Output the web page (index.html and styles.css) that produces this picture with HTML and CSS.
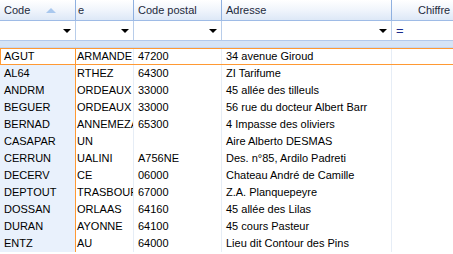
FILE: index.html
```html
<!DOCTYPE html>
<html lang="fr">
<head>
    <title>Liste</title>
    <link rel="stylesheet" href="styles.css">
</head>
<body>
    <div class="grid">
        <div class="row head">
            <div class="cell">Code <span class="sort-arrow"></span></div>
            <div class="cell city">e</div>
            <div class="cell">Code postal</div>
            <div class="cell">Adresse</div>
            <div class="cell last">Chiffre</div>
        </div>
        <div class="row filter">
            <div class="cell"><span class="drop"></span></div>
            <div class="cell"><span class="drop"></span></div>
            <div class="cell"><span class="drop"></span></div>
            <div class="cell"><span class="drop"></span></div>
            <div class="cell eq">=</div>
        </div>
        <div class="band"></div>
        <div id="rows"></div>
    </div>

    <script>
        const data = [
            ['AGUT', 'ARMANDE', '47200', '34 avenue Giroud'],
            ['AL64', 'RTHEZ', '64300', 'ZI Tarifume'],
            ['ANDRM', 'ORDEAUX', '33000', '45 allée des tilleuls'],
            ['BEGUER', 'ORDEAUX', '33000', '56 rue du docteur Albert Barr'],
            ['BERNAD', 'ANNEMEZA', '65300', '4 Impasse des oliviers'],
            ['CASAPAR', 'UN', '', 'Aire Alberto DESMAS'],
            ['CERRUN', 'UALINI', 'A756NE', 'Des. n°85, Ardilo Padreti'],
            ['DECERV', 'CE', '06000', 'Chateau André de Camille'],
            ['DEPTOUT', 'TRASBOUF', '67000', 'Z.A. Planquepeyre'],
            ['DOSSAN', 'ORLAAS', '64160', '45 allée des Lilas'],
            ['DURAN', 'AYONNE', '64100', '45 cours Pasteur'],
            ['ENTZ', 'AU', '64000', 'Lieu dit Contour des Pins']
        ];

        const rows = document.getElementById('rows');
        data.forEach((item, i) => {
            const row = document.createElement('div');
            row.className = 'row data' + (i === 0 ? ' current' : '');
            const classes = ['sorted', 'city', '', '', ''];
            item.concat(['']).forEach((text, j) => {
                const cell = document.createElement('div');
                cell.className = ('cell ' + classes[j]).trim();
                cell.textContent = text;
                row.appendChild(cell);
            });
            rows.appendChild(row);
        });
    </script>
</body>
</html>
```

FILE: styles.css
```css
body {
    margin: 0;
    background: #ffffff;
    font-family: "Liberation Sans", Arial, sans-serif;
    font-size: 11px;
    color: #000000;
    overflow: hidden;
}

.grid {
    width: 453px;
}

.row {
    display: grid;
    grid-template-columns: 76px 58px 88px 170px 80px;
}

.cell {
    box-sizing: border-box;
    padding: 0 3px 0 4px;
    white-space: nowrap;
    overflow: hidden;
    position: relative;
}

.cell.city {
    padding-left: 1px;
    padding-right: 0;
    text-overflow: clip;
}

.head {
    height: 21px;
    background: linear-gradient(#ffffff, #f2f6fc 45%, #dde8f7);
    border-bottom: 1px solid #9ebbe6;
    box-sizing: border-box;
}

.head .cell {
    line-height: 20px;
    color: #1e2a3c;
    border-right: 1px solid #8fb0e0;
}

.head .city {
    padding-left: 2px;
}

.head .last {
    padding-left: 26px;
}

.sort-arrow {
    position: absolute;
    left: 46px;
    top: 8px;
    width: 0;
    height: 0;
    border-left: 5px solid transparent;
    border-right: 5px solid transparent;
    border-bottom: 5px solid #a9c8ee;
}

.filter {
    height: 19px;
    background: #ffffff;
}

.filter .cell {
    border-right: 1px solid #b8cdea;
}

.drop {
    position: absolute;
    right: 4px;
    top: 8px;
    width: 0;
    height: 0;
    border-left: 4px solid transparent;
    border-right: 4px solid transparent;
    border-top: 4px solid #000000;
}

.eq {
    color: #1a2a8c;
    font-size: 13px;
    line-height: 19px;
}

.band {
    height: 6px;
    background: #d6e4f6;
    border-top: 1px solid #b3c9ea;
    border-bottom: 1px solid #c5d6ef;
}

.data {
    height: 17px;
}

.data .cell {
    line-height: 17px;
    border-right: 1px solid #e6edf6;
}

.data .sorted {
    background: #e9f1fc;
    border-right: 1px solid #ff9933;
}

.current {
    border-top: 1px solid #ff9933;
    border-bottom: 1px solid #ff9933;
    box-sizing: border-box;
}

.current .cell {
    line-height: 15px;
}

.current .sorted {
    background: #ffffff;
    border-left: 1px solid #ff9933;
    padding-left: 3px;
}
```
